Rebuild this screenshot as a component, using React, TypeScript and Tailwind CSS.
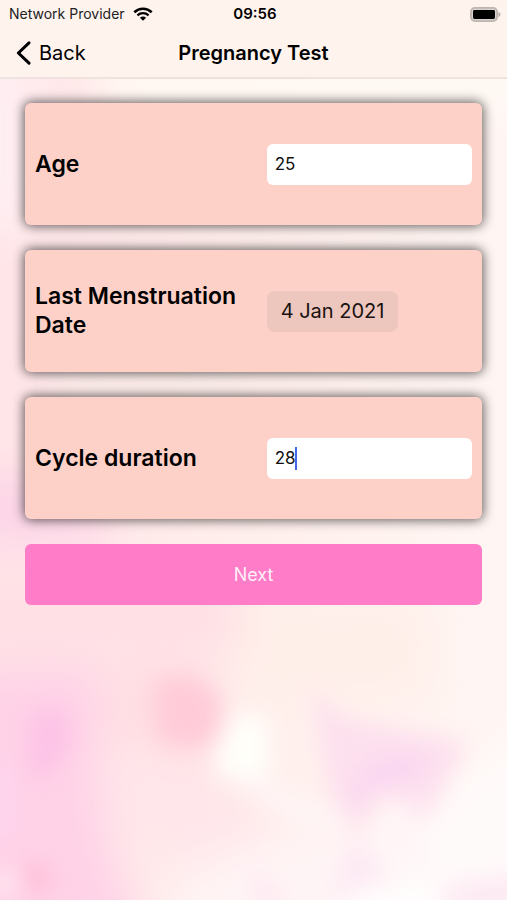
import { useState } from "react";
import type { ReactNode } from "react";

function WatercolorBackground() {
  return (
    <svg
      aria-hidden="true"
      viewBox="0 0 507 900"
      preserveAspectRatio="none"
      className="absolute inset-0 h-full w-full"
    >
      <defs>
        <linearGradient id="wash" x1="0" y1="0" x2="1" y2="0">
          <stop offset="0" stopColor="#ffe5e8" />
          <stop offset="0.5" stopColor="#ffefec" />
          <stop offset="1" stopColor="#fff6f3" />
        </linearGradient>
        <filter id="soft" x="-50%" y="-50%" width="200%" height="200%">
          <feGaussianBlur stdDeviation="11" />
        </filter>
        <filter id="softer" x="-50%" y="-50%" width="200%" height="200%">
          <feGaussianBlur stdDeviation="20" />
        </filter>
      </defs>
      <rect width="507" height="900" fill="url(#wash)" />
      <g filter="url(#softer)">
        <path d="M100 60H520V110H100Z" fill="#fffaf4" />
        <path d="M-40 60H40V230H-40Z" fill="#ffeef2" />
        <path d="M60 365H240V400H60Z" fill="#fbeeea" />
        <path d="M-40 470L30 475L110 515L110 540L20 550L-40 530Z" fill="#fdd6e8" />
        <path d="M-40 575H240V655H-40Z" fill="#ffe0e5" />
        <path d="M240 600H430V700H240Z" fill="#ffefe9" />
        <path d="M-40 670L100 665L100 780L110 850L145 940H-40Z" fill="#ffd2e7" />
        <path d="M110 665H215V800H110Z" fill="#ffdde2" />
        <path d="M110 740L200 760L270 820L250 880L160 860L110 820Z" fill="#ffe6ea" />
        <path d="M390 830L540 720V940H350Z" fill="#fffafa" />
        <path d="M175 890L215 855L360 820L440 940H170Z" fill="#fff4f5" />
      </g>
      <g filter="url(#soft)">
        <path d="M28 715L62 705L75 740L45 780L28 775Z" fill="#fdc3e7" />
        <path d="M-10 740L15 780L18 830L-10 850Z" fill="#fdd4ee" />
        <path d="M155 680L190 676L219 694L217 738L190 748L158 740Z" fill="#ffcbd8" />
        <path d="M238 712L266 718L270 776L220 780L216 755Z" fill="#fffffa" />
        <path d="M222 772L262 780L345 815L345 835L290 820Z" fill="#fff5f6" />
        <path d="M310 685L342 718L468 742L425 820L380 795L358 835L330 795Z" fill="#fde0ee" />
        <path d="M380 755L435 755L415 780L375 786L358 812L348 790Z" fill="#fbd6f2" />
        <path d="M352 840L380 860L380 880L330 900Z" fill="#fde9f4" />
        <path d="M385 812L412 798L430 880L370 840Z" fill="#fff5f7" />
        <path d="M24 862L47 867L50 888L27 893Z" fill="#ffbcd6" />
        <path d="M-10 874L18 876L20 892L-10 894Z" fill="#ffeaf1" />
        <path d="M255 875L290 900H255Z" fill="#fde2ee" />
        <path d="M450 885L520 875V910H440Z" fill="#fde8f3" />
        <path d="M345 895L430 885L430 910H345Z" fill="#ffffff" />
      </g>
    </svg>
  );
}

function WifiIcon() {
  return (
    <svg aria-hidden="true" viewBox="0 0 20 14" className="h-3.5 w-5">
      <path d="M1.3 5.2C6.2.6 13.8.6 18.7 5.2" fill="none" stroke="#000" strokeWidth="2.6" />
      <path d="M4.4 8.3C7.6 5.4 12.4 5.4 15.6 8.3" fill="none" stroke="#000" strokeWidth="2.3" />
      <path d="M10 13.8L6.9 10.7C8.7 9.1 11.3 9.1 13.1 10.7Z" fill="#000" />
    </svg>
  );
}

function BatteryIcon() {
  return (
    <svg aria-hidden="true" viewBox="0 0 31 15" className="h-[15px] w-[31px]">
      <rect x="0.9" y="0.9" width="26.2" height="13.2" rx="4" fill="#d9d1cd" stroke="#bdb5b1" strokeWidth="1.8" />
      <rect x="3" y="3" width="22" height="9" rx="1.4" fill="#000" />
      <path d="M28.4 5C31.2 5.8 31.2 9.2 28.4 10Z" fill="#b5aeaa" />
    </svg>
  );
}

type FieldCardProps = {
  label: string;
  htmlFor: string;
  children: ReactNode;
};

function FieldCard({ label, htmlFor, children }: FieldCardProps) {
  return (
    <div className="flex min-h-[122px] items-center rounded-md bg-[#fed1c8] px-2.5 shadow-[0_0_12px_1px_rgba(0,0,0,0.65)]">
      <label htmlFor={htmlFor} className="flex-1 text-[23px] leading-[29px] font-semibold text-black">
        {label}
      </label>
      <div className="w-[47%]">{children}</div>
    </div>
  );
}

const inputClass =
  "h-[41px] w-full rounded-md bg-white px-2 text-[17px] text-[#111] outline-none";

export default function App() {
  const [age, setAge] = useState("25");
  const [cycle, setCycle] = useState("28");

  return (
    <div className="relative min-h-screen overflow-hidden font-['Inter','Liberation_Sans',sans-serif] text-black">
      <WatercolorBackground />

      <div className="relative">
        <header className="border-b-2 border-[#efe3df] bg-[#fff3ee]">
          <div className="grid h-7 grid-cols-[1fr_auto_1fr] items-center pr-1.5 pl-[9px] text-sm">
            <div className="flex items-center gap-2 text-[#222]">
              <span>Network Provider</span>
              <WifiIcon />
            </div>
            <span className="text-[15px] font-semibold">09:56</span>
            <div className="flex justify-end">
              <BatteryIcon />
            </div>
          </div>
          <nav className="grid h-[49px] grid-cols-[1fr_auto_1fr] items-center px-4 text-xl">
            <a href="#back" className="flex items-center gap-2 justify-self-start">
              <svg aria-hidden="true" viewBox="0 0 15 24" className="h-6 w-[15px]">
                <path d="M13 1.8L2.4 12L13 22.2" fill="none" stroke="#000" strokeWidth="3" strokeLinecap="round" strokeLinejoin="round" />
              </svg>
              Back
            </a>
            <h1 className="font-semibold">Pregnancy Test</h1>
          </nav>
        </header>

        <form
          className="flex flex-col gap-[25px] px-[25px] pt-6 pb-8"
          onSubmit={(event) => event.preventDefault()}
        >
          <FieldCard label="Age" htmlFor="age">
            <input
              id="age"
              inputMode="numeric"
              value={age}
              onChange={(event) => setAge(event.target.value)}
              className={inputClass}
            />
          </FieldCard>

          <FieldCard label="Last Menstruation Date" htmlFor="last-date">
            <button
              id="last-date"
              type="button"
              className="h-[41px] rounded-lg bg-[#edc6be] px-3.5 text-xl text-[#1a1210]"
            >
              4 Jan 2021
            </button>
          </FieldCard>

          <FieldCard label="Cycle duration" htmlFor="cycle">
            <div className="relative">
              <input
                id="cycle"
                inputMode="numeric"
                value={cycle}
                onChange={(event) => setCycle(event.target.value)}
                className={`${inputClass} caret-transparent`}
              />
              <span className="pointer-events-none absolute top-[9px] left-7 h-[23px] w-0.5 bg-[#4268e8]" />
            </div>
          </FieldCard>

          <button type="submit" className="h-[61px] rounded-md bg-[#ff7cc8] text-lg text-[#fff0f8]">
            Next
          </button>
        </form>
      </div>
    </div>
  );
}
